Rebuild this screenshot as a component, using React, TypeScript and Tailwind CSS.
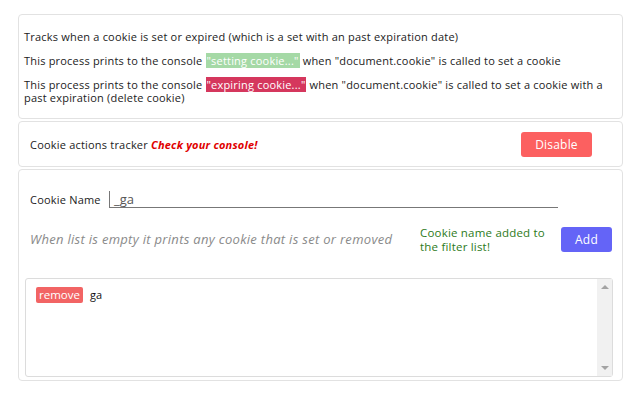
import React from "react";

export default function App() {
  return (
    <div
      className="w-[640px] h-[400px] bg-white text-[#222] text-[11px] leading-[13px] tracking-[0.2px] overflow-hidden"
      style={{ fontFamily: "'Open Sans', sans-serif" }}
    >
      <div className="pl-[18px] pt-[14px] w-[623px] flex flex-col">
        {/* Card 1 */}
        <div className="border border-[#e2e2e2] rounded-[4px] h-[105px] pl-[5px] pr-[16px] pt-[15px] flex flex-col gap-[11px]">
          <p>Tracks when a cookie is set or expired (which is a set with an past expiration date)</p>
          <p>
            This process prints to the console{" "}
            <span className="bg-[#a5d9a6] text-white px-[1px]">"setting cookie..."</span>{" "}
            when "document.cookie" is called to set a cookie
          </p>
          <p>
            This process prints to the console{" "}
            <span className="bg-[#d5375d] text-white px-[1px]">"expiring cookie..."</span>{" "}
            when "document.cookie" is called to set a cookie with a past expiration (delete cookie)
          </p>
        </div>

        {/* Card 2 */}
        <div className="mt-[2px] border border-[#e2e2e2] rounded-[4px] h-[46px] pl-[11px] pr-[30px] flex items-center justify-between">
          <div>
            Cookie actions tracker{" "}
            <span className="text-[#e00000] font-bold italic">Check your console!</span>
          </div>
          <button className="w-[71px] h-[25px] rounded-[3px] bg-[#fc6060] text-white text-[12px]">
            Disable
          </button>
        </div>

        {/* Card 3 */}
        <div className="mt-[2px] border border-[#e2e2e2] rounded-[4px] h-[212px] pl-[11px] pr-[9px] pt-[21px] flex flex-col">
          <div className="flex items-end">
            <span className="w-[79px] mb-[2px] whitespace-nowrap">Cookie Name</span>
            <div className="w-[449px] h-[17px] border-l border-b border-[#777] pl-[4px] text-[#555] text-[13px] leading-[16px] tracking-normal">
              _ga
            </div>
          </div>
          <div className="mt-[19px] flex items-center h-[25px]">
            <span className="italic text-[#8a8a8a] text-[13px] tracking-[0.3px] w-[390px] whitespace-nowrap">
              When list is empty it prints any cookie that is set or removed
            </span>
            <span className="text-[#2d7a1a] text-[11.5px] w-[130px] leading-[14px]">
              Cookie name added to the filter list!
            </span>
            <button className="ml-[11px] w-[51px] h-[25px] rounded-[3px] bg-[#6464f7] text-white text-[12px]">
              Add
            </button>
          </div>
          <div className="mt-[26px] ml-[-5px] h-[99px] border border-[#dcdcdc] rounded-[3px] flex">
            <div className="flex-1 pt-[8px] pl-[10px] flex items-start">
              <span className="bg-[#f26464] text-white text-[11.5px] leading-[16px] px-[3px] rounded-[2px] tracking-normal">
                remove
              </span>
              <span className="ml-[7px] text-[#111] leading-[16px]">ga</span>
            </div>
            <div className="w-[15px] bg-[#f1f1f1] flex flex-col items-center justify-between py-[6px]">
              <div className="w-0 h-0 border-l-[4px] border-r-[4px] border-b-[4px] border-l-transparent border-r-transparent border-b-[#a3a3a3]" />
              <div className="w-0 h-0 border-l-[4px] border-r-[4px] border-t-[4px] border-l-transparent border-r-transparent border-t-[#a3a3a3]" />
            </div>
          </div>
        </div>
      </div>
    </div>
  );
}
